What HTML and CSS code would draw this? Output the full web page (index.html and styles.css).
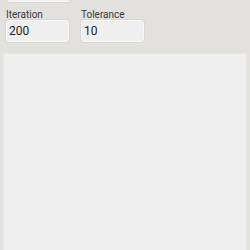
FILE: index.html
```html
<!DOCTYPE html>
<html lang="en">
<head>
    <meta charset="UTF-8">
    <meta name="viewport" content="width=device-width, initial-scale=1.0">
    <title>Solver settings</title>
    <link rel="stylesheet" href="styles.css">
</head>
<body>
    <div class="form">
        <div class="input top-input"></div>

        <div class="row">
            <div class="field">
                <label for="iteration">Iteration</label>
                <div class="input" id="iteration">200</div>
            </div>
            <div class="field">
                <label for="tolerance">Tolerance</label>
                <div class="input" id="tolerance">10</div>
            </div>
        </div>
    </div>

    <div class="panel"></div>
</body>
</html>
```

FILE: styles.css
```css
:root {
    --background: #e2e1dd;
    --surface: #efefef;
    --input: #efefef;
    --text: #222222;
}

html, body {
    height: 100%;
}

body {
    margin: 0;
    background: var(--background);
    color: var(--text);
    font-family: Roboto, "Noto Sans", sans-serif;
    display: flex;
    flex-direction: column;
    overflow: hidden;
}

.form {
    padding: 0 6px;
}

.input {
    box-sizing: border-box;
    width: 63px;
    height: 22px;
    padding: 2px 0 0 2px;
    background: var(--input);
    border: 1px solid #f7f7f6;
    border-radius: 3px;
    box-shadow: 0 0 0 1px #d8d7d3;
    font-size: 12px;
    line-height: 16px;
}

.top-input {
    margin: -20px 0 0 1px;
}

.row {
    display: flex;
    gap: 12px;
    margin-top: 7px;
}

.field label {
    display: block;
    font-size: 10px;
    line-height: 11px;
    height: 11px;
    color: #3a3a3a;
}

.panel {
    flex: 1;
    margin: 11px 3px 0;
    background: var(--surface);
    border: 1px solid #e6e6e3;
    border-bottom: none;
}
```
